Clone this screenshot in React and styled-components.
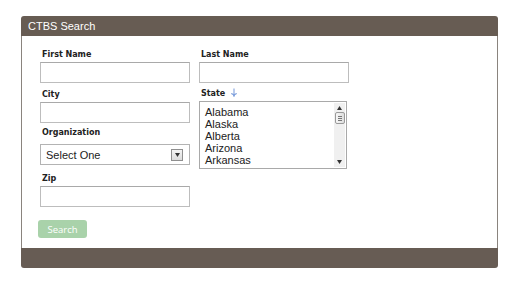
import React from "react";
import styled, { createGlobalStyle } from "styled-components";

const GlobalStyle = createGlobalStyle`
  body {
    margin: 0;
    background: #ffffff;
    font-family: "Liberation Sans", Arial, sans-serif;
  }
`;

const Page = styled.div`
  padding: 16px 18px 0 21px;
`;

const Panel = styled.div`
  width: 477px;
  border-radius: 3px;
  overflow: hidden;
`;

const Header = styled.div`
  height: 20px;
  background: #675c53;
  color: #ffffff;
  font-size: 11px;
  line-height: 21px;
  padding-left: 7px;
`;

const Body = styled.div`
  border-left: 1px solid #8a847e;
  border-right: 1px solid #8a847e;
  padding: 10px 0 10px 18px;
  background: #fff;
`;

const Columns = styled.div`
  display: flex;
  gap: 9px;
  align-items: flex-start;
`;

const Column = styled.div`
  display: flex;
  flex-direction: column;
  width: ${(p) => p.width || 150}px;
`;

const Label = styled.label`
  display: flex;
  align-items: center;
  gap: 5px;
  height: 16px;
  margin-top: ${(p) => p.top || 0}px;
  margin-left: 2px;
  font-family: "DejaVu Sans", Verdana, sans-serif;
  font-weight: bold;
  font-size: 8px;
  color: #222;
`;

const Input = styled.input`
  box-sizing: border-box;
  width: 150px;
  height: 21px;
  margin: 0;
  border: 1px solid #bdbdbd;
  border-top-color: #a9a9a9;
  background: #fff;
  outline: none;
`;

const Select = styled.div`
  box-sizing: border-box;
  width: 150px;
  height: 21px;
  margin-top: 4px;
  border: 1px solid #b3b3b3;
  display: flex;
  align-items: center;
  justify-content: space-between;
  padding: 0 6px 0 5px;
  font-size: 11px;
  color: #222;
`;

const DropButton = styled.span`
  box-sizing: border-box;
  width: 12px;
  height: 12px;
  border: 1px solid #8f8f8f;
  background: linear-gradient(#f4f4f4, #dcdcdc);
  display: flex;
  align-items: center;
  justify-content: center;
`;

const ListBox = styled.div`
  box-sizing: border-box;
  width: 148px;
  height: 68px;
  border: 1px solid #a9a9a9;
  display: flex;
`;

const Options = styled.ul`
  flex: 1;
  list-style: none;
  margin: 0;
  padding: 4px 0 0 5px;
  font-size: 11px;
  line-height: 12px;
  color: #222;
`;

const Track = styled.div`
  width: 11px;
  margin: 1px 1px 1px 0;
  background: #f0f0f0;
  display: flex;
  flex-direction: column;
  align-items: center;
  justify-content: space-between;
  padding: 3px 0;
  box-sizing: border-box;
`;

const Thumb = styled.div`
  box-sizing: border-box;
  width: 10px;
  height: 12px;
  margin-top: 2px;
  border: 1px solid #9a9a9a;
  border-radius: 2px;
  background: linear-gradient(90deg, #f6f6f6, #dedede);
  display: flex;
  flex-direction: column;
  justify-content: center;
  align-items: center;
  gap: 1px;
  & > i {
    display: block;
    width: 4px;
    height: 1px;
    background: #777;
  }
`;

const Spacer = styled.div`
  flex: 1;
`;

const SearchButton = styled.button`
  margin: 13px 0 0 -2px;
  width: 49px;
  height: 18px;
  border: none;
  border-radius: 3px;
  background: #a9d2aa;
  color: #ffffff;
  font-family: "Open Sans", sans-serif;
  font-size: 9.5px;
  padding: 0;
  cursor: pointer;
`;

const Footer = styled.div`
  height: 20px;
  background: #675c54;
`;

const Arrow = ({ dir }) => (
  <svg width="5" height="4" viewBox="0 0 5 4">
    <path d={dir === "up" ? "M0 4 L2.5 0 L5 4 Z" : "M0 0 L2.5 4 L5 0 Z"} fill="#333" />
  </svg>
);

const InfoArrow = () => (
  <svg width="8" height="10" viewBox="0 0 8 10">
    <path d="M4 0.5 V8.5 M1.2 5.5 Q4 6 4 8.8 Q4 6 6.8 5.5" stroke="#7fa0dc" strokeWidth="1.1" fill="none" />
  </svg>
);

const states = ["Alabama", "Alaska", "Alberta", "Arizona", "Arkansas"];

export default function App() {
  return (
    <Page>
      <GlobalStyle />
      <Panel>
        <Header>CTBS Search</Header>
        <Body>
          <Columns>
            <Column>
              <Label>First Name</Label>
              <Input />
              <Label top={3}>City</Label>
              <Input />
              <Label top={1}>Organization</Label>
              <Select>
                Select One
                <DropButton>
                  <Arrow dir="down" />
                </DropButton>
              </Select>
              <Label top={5}>Zip</Label>
              <Input />
            </Column>
            <Column>
              <Label>Last Name</Label>
              <Input />
              <Label top={2}>
                State <InfoArrow />
              </Label>
              <ListBox>
                <Options>
                  {states.map((s) => (
                    <li key={s}>{s}</li>
                  ))}
                </Options>
                <Track>
                  <Arrow dir="up" />
                  <Thumb>
                    <i />
                    <i />
                    <i />
                  </Thumb>
                  <Spacer />
                  <Arrow dir="down" />
                </Track>
              </ListBox>
            </Column>
          </Columns>
          <SearchButton>Search</SearchButton>
        </Body>
        <Footer />
      </Panel>
    </Page>
  );
}
